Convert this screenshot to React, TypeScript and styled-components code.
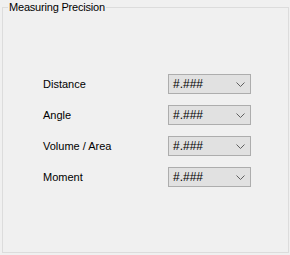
import React from "react";
import styled, { createGlobalStyle } from "styled-components";

const Global = createGlobalStyle`
  html, body { margin: 0; padding: 0; background: #f0f0f0; }
  body { width: 290px; height: 255px; overflow: hidden; font-family: "Liberation Sans", Arial, sans-serif; }
`;

const Group = styled.fieldset`
  box-sizing: border-box;
  margin: 0 1px 0 2px;
  width: 287px;
  height: 253px;
  padding: 0;
  border: 1px solid #dcdcdc;
  min-width: 0;
`;

const Title = styled.legend`
  margin-left: 5px;
  padding: 0 1px;
  font-size: 11px;
  line-height: 14px;
  letter-spacing: -0.2px;
  color: #000;
`;

const Rows = styled.div`
  display: grid;
  grid-template-columns: 125px 83px;
  grid-auto-rows: 20px;
  row-gap: 11px;
  padding: 60px 0 0 40px;
  align-items: center;
`;

const Label = styled.span`
  font-size: 11px;
  color: #000;
`;

const Combo = styled.div`
  box-sizing: border-box;
  height: 20px;
  display: flex;
  align-items: center;
  justify-content: space-between;
  padding: 0 5px 0 4px;
  background: #e1e1e1;
  border: 1px solid #adadad;
  font-size: 12px;
  color: #000;
`;

const Chevron = () => (
  <svg width="9" height="5" viewBox="0 0 9 5">
    <path d="M0.5 0.5 L4.5 4.5 L8.5 0.5" fill="none" stroke="#606060" strokeWidth="1" />
  </svg>
);

const items = ["Distance", "Angle", "Volume / Area", "Moment"];

export default function App() {
  return (
    <>
      <Global />
      <Group>
        <Title>Measuring Precision</Title>
        <Rows>
          {items.map((t) => (
            <React.Fragment key={t}>
              <Label>{t}</Label>
              <Combo>
                <span>#.###</span>
                <Chevron />
              </Combo>
            </React.Fragment>
          ))}
        </Rows>
      </Group>
    </>
  );
}
